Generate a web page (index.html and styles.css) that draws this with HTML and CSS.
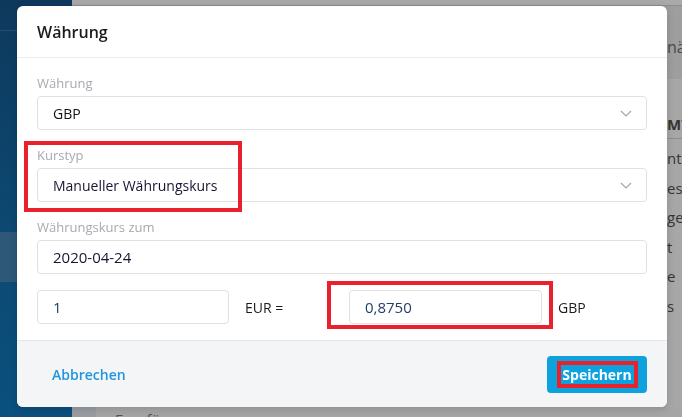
FILE: index.html
```html
<!DOCTYPE html>
<html lang="de">

<head>
  <meta charset="UTF-8">
  <meta name="viewport" content="width=device-width, initial-scale=1.0">
  <title>Währung</title>
  <link rel="stylesheet" href="styles.css">
</head>

<body>
  <div id="app">
    <div id="sidebar">
      <div class="side-top"></div>
      <div class="side-active"></div>
    </div>

    <div id="main">
      <div class="main-head">
        <span class="head-title">nä</span>
      </div>
      <div class="main-list">
        <div class="list-head">MT</div>
        <div class="list-row">nt</div>
        <div class="list-row">es</div>
        <div class="list-row">ge</div>
        <div class="list-row">t</div>
        <div class="list-row">e</div>
        <div class="list-row">s</div>
      </div>
      <div class="main-foot">Empfänger</div>
    </div>
  </div>

  <!-- Dialog over the dimmed page -->
  <div id="currency-dialog" class="dialog">
    <div class="dialog-header">
      <h2>Währung</h2>
    </div>

    <div class="dialog-body">
      <div class="field">
        <label>Währung</label>
        <div class="select">
          <span>GBP</span>
          <svg class="chevron" viewBox="0 0 12 7"><path d="M1 1l5 5 5-5"/></svg>
        </div>
      </div>

      <div class="field">
        <label>Kurstyp</label>
        <div class="select">
          <span class="value-dark">Manueller Währungskurs</span>
          <svg class="chevron" viewBox="0 0 12 7"><path d="M1 1l5 5 5-5"/></svg>
        </div>
        <span class="mark mark-type"></span>
      </div>

      <div class="field">
        <label>Währungskurs zum</label>
        <div class="input"><span class="value-dark">2020-04-24</span></div>
      </div>

      <div class="rate-row">
        <div class="input"><span class="value-num">1</span></div>
        <span class="unit">EUR =</span>
        <div class="rate-cell">
          <div class="input"><span class="value-num">0,8750</span></div>
          <span class="mark mark-rate"></span>
        </div>
        <span class="unit">GBP</span>
      </div>
    </div>

    <div class="dialog-footer">
      <button class="btn-link">Abbrechen</button>
      <button class="btn-primary"><span class="btn-mark">Speichern</span></button>
    </div>
  </div>
</body>

</html>
```

FILE: styles.css
```css
body,
html {
  margin: 0;
  padding: 0;
  width: 100%;
  height: 100%;
  overflow: hidden;
  font-family: "Open Sans", Arial, sans-serif;
}

#app {
  display: flex;
  width: 100%;
  height: 100%;
}

#sidebar {
  width: 72px;
  flex-shrink: 0;
  background: linear-gradient(#0e395d, #0c4a74 60%, #0a507e);
}

.side-top {
  height: 30px;
  border-bottom: 1px solid #24506f;
}

.side-active {
  margin-top: 201px;
  height: 50px;
  background-color: #2d5878;
}

#main {
  flex: 1;
  display: flex;
  flex-direction: column;
  background-color: #a7a7a7;
  color: #353535;
  border-top: 5px solid #a9a9a9;
}

.main-head {
  height: 73px;
  border-top: 1px solid #8c8c8c;
  background-color: #9e9e9e;
  padding-left: 595px;
  font-size: 16px;
  line-height: 22px;
  color: #4a4a4a;
}

.head-title {
  display: block;
  margin-top: 30px;
}

.main-list {
  flex: 1;
  display: flex;
  flex-direction: column;
  align-items: flex-start;
  padding-top: 35px;
  padding-left: 595px;
  font-size: 15px;
  line-height: 20px;
}

.list-head {
  font-weight: 700;
  width: 20px;
  padding-bottom: 4px;
  border-bottom: 1px solid #8e8e8e;
  margin-bottom: 9px;
}

.list-row {
  height: 29.5px;
}

.main-foot {
  height: 10px;
  padding-left: 19px;
  font-size: 15px;
  color: #505050;
  line-height: 24px;
  background-color: #a5a5a5;
  border-left: 24px solid #999da1;
  overflow: hidden;
}

/* dialog */

.dialog {
  position: fixed;
  top: 6px;
  left: 17px;
  width: 650px;
  background-color: #ffffff;
  border-radius: 6px;
  box-shadow: 0 2px 8px rgba(0, 0, 0, 0.15);
  overflow: hidden;
  color: #1b1b1b;
}

.dialog-header {
  height: 51px;
  border-bottom: 1px solid #ebebeb;
  padding: 0 20px;
  display: flex;
  align-items: center;
}

.dialog-header h2 {
  margin: 0;
  font-size: 16px;
  font-weight: 600;
  color: #1a1a1a;
}

.dialog-body {
  padding: 16px 20px 16px;
}

.field {
  position: relative;
  margin-bottom: 16px;
}

.field label {
  display: block;
  font-size: 13px;
  line-height: 18px;
  margin-bottom: 4px;
  color: #a8a8b0;
}

.select,
.input {
  box-sizing: border-box;
  height: 34px;
  border: 1px solid #e1e1e1;
  border-radius: 4px;
  padding: 0 15px;
  display: flex;
  align-items: center;
  justify-content: space-between;
  font-size: 15px;
  color: #111;
}

.select {
  font-size: 14px;
}

.value-dark {
  color: #1b1330;
}

.value-num {
  color: #233e66;
}

.chevron {
  width: 12px;
  height: 7px;
  margin-right: -1px;
  fill: none;
  stroke: #a3a6ab;
  stroke-width: 1.2;
}

.rate-row {
  display: grid;
  grid-template-columns: 192px 88px 193px auto;
  gap: 16px;
  align-items: center;
  font-size: 14px;
}

.rate-cell {
  position: relative;
}

.unit {
  color: #1b1b1b;
}

.mark {
  position: absolute;
  border: 4px solid #e8212b;
  pointer-events: none;
}

.mark-type {
  left: -13px;
  top: -5px;
  width: 210px;
  height: 63px;
}

.mark-rate {
  left: -22px;
  top: -9px;
  width: 218px;
  height: 40px;
}

.dialog-footer {
  height: 66px;
  border-top: 1px solid #e6e6e6;
  background-color: #f4f5f7;
  display: flex;
  align-items: center;
  justify-content: space-between;
  padding: 0 20px;
}

button {
  font-family: "Open Sans", Arial, sans-serif;
  cursor: pointer;
}

.btn-link {
  border: none;
  background: none;
  padding: 0 15px;
  font-size: 14px;
  font-weight: 600;
  color: #2196dc;
}

.btn-primary {
  height: 37px;
  width: 100px;
  border: none;
  border-radius: 4px;
  background-color: #0da1dd;
  padding: 0;
  display: flex;
  align-items: center;
  justify-content: center;
}

.btn-mark {
  display: block;
  box-sizing: border-box;
  width: 81px;
  height: 27px;
  border: 4px solid #e8212b;
  color: #ffffff;
  font-size: 14px;
  font-weight: 700;
  line-height: 19px;
}
```
